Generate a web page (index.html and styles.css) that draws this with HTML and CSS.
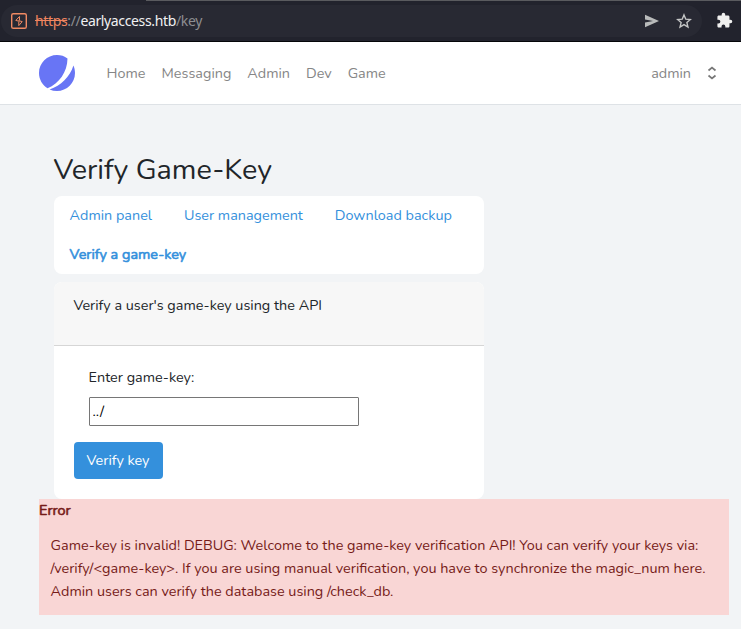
FILE: index.html
```html
<!DOCTYPE html>
<html lang="en">
<head>
<meta charset="utf-8">
<title>Verify Game-Key</title>
<link rel="stylesheet" href="styles.css">
</head>
<body>
<div class="browser-bar">
  <div class="address">
    <svg class="site-icon" width="18" height="18" viewBox="0 0 18 18"><rect x="1.700" y="1.700" width="14.600" height="14.600" rx="1.600" fill="none" stroke="#f08a63" stroke-width="1.400"/><path d="M9.500 4.500v3.700M9.500 4.500 5.800 8.400l3.700 1M8.500 8.600l3.700 1-3.400 4M8.800 10v3.600" fill="none" stroke="#f08a63" stroke-width="1"/></svg>
    <div class="url"><span class="scheme">https</span>://<span class="host">earlyaccess.htb</span>/key</div>
    <svg class="send" width="16" height="14" viewBox="0 0 16 14"><path d="M1 .7 15 7 1 13.300V8.500L9 7 1 5.500z" fill="#b9bbbb"/></svg>
    <svg class="star" width="16" height="16" viewBox="0 0 16 16"><path d="m8 1.900 1.800 4.250 4.600.4-3.500 3 1.050 4.500L8 11.650l-3.950 2.400 1.050-4.500-3.500-3 4.600-.4z" fill="none" stroke="#c5c6c6" stroke-width="1.400"/></svg>
  </div>
  <svg class="puzzle" width="17" height="17" viewBox="0 0 24 24"><path d="M20.500 11H19V7c0-1.100-.9-2-2-2h-4V3.500a2.500 2.500 0 0 0-5 0V5H4c-1.100 0-2 .9-2 2v3.800h1.500a2.700 2.700 0 0 1 0 5.400H2V20c0 1.100.9 2 2 2h3.800v-1.500a2.700 2.700 0 0 1 5.400 0V22H17c1.100 0 2-.9 2-2v-4h1.500a2.500 2.500 0 0 0 0-5z" fill="#f0f0ef"/></svg>
</div>
<header class="site-header">
  <svg class="logo" width="36" height="36" viewBox="0 0 48 48"><path d="M11.395 44.428C4.557 40.198 0 32.632 0 24 0 10.745 10.745 0 24 0a23.891 23.891 0 0 1 13.997 4.502c-.2 17.907-11.097 33.245-26.602 39.926z" fill="#6875f5"/><path d="M14.134 45.885A23.914 23.914 0 0 0 24 48c13.255 0 24-10.745 24-24 0-3.516-.756-6.856-2.115-9.866-4.659 15.143-16.608 27.092-31.750 31.751z" fill="#6875f5"/></svg>
  <nav class="main-nav">
    <a>Home</a><a>Messaging</a><a>Admin</a><a>Dev</a><a>Game</a>
  </nav>
  <div class="user"><span>admin</span>
    <svg width="16" height="16" viewBox="0 0 16 16"><path d="M4.500 5.500 8 2.500l3.500 3M4.500 10.500l3.500 3 3.500-3" fill="none" stroke="#777" stroke-width="1.700"/></svg>
  </div>
</header>
<main>
  <h1>Verify Game-Key</h1>
  <nav class="tabs"><a>Admin panel</a><a>User management</a><a>Download backup</a><a class="active">Verify a game-key</a></nav>
  <section class="card">
    <div class="card-head">Verify a user's game-key using the API</div>
    <form class="card-body">
      <label for="key">Enter game-key:</label>
      <input id="key" type="text" value="../">
      <button type="button">Verify key</button>
    </form>
  </section>
  <div class="alert">
    <strong>Error</strong>
    <p>Game-key is invalid! DEBUG: Welcome to the game-key verification API! You can verify your keys via:<br>/verify/&lt;game-key&gt;. If you are using manual verification, you have to synchronize the magic_num here.<br>Admin users can verify the database using /check_db.</p>
  </div>
</main>
</body>
</html>
```
FILE: styles.css
```css
* { box-sizing: border-box; }
body {
  margin: 0;
  height: 629px;
  overflow: hidden;
  background: #f2f4f6;
  color: #212529;
  font: 14.4px/23px Nunito, Lato, sans-serif;
}
a, h1, p, strong, button { white-space: nowrap; }
svg { display: block; flex: none; }

.browser-bar {
  display: flex;
  align-items: center;
  height: 42px;
  background: linear-gradient(90deg, #22232d 146px, #5a5b5f 146px) top / 100% 1px no-repeat #22232d;
  border-bottom: 1px solid #050609;
}
.address {
  display: flex;
  align-items: center;
  width: 701px;
  height: 32px;
  margin-left: 1px;
  padding: 0 10px 0 9px;
  border-radius: 16px;
  background: #282933;
}
.url {
  flex: 1;
  margin-left: 7px;
  color: #8d8e91;
  font: 14px/20px "Noto Sans", sans-serif;
  letter-spacing: -.36px;
}
.scheme { color: #f0855f; text-decoration: line-through; }
.host { color: #f1f1f2; }
.send { margin-right: 16px; }
.puzzle { margin-left: 14px; }

.site-header {
  display: flex;
  align-items: center;
  height: 63px;
  padding: 0 21px 0 39px;
  background: #fff;
  border-bottom: 1px solid #dee2e6;
  color: #868686;
}
.main-nav { display: flex; gap: 16px; margin-left: 31.6px; }
.user { display: flex; align-items: center; gap: 13px; margin-left: auto; }

main { padding: 47px 12px 0 39px; }
h1 {
  margin: 0 0 9px 14.6px;
  font-size: 28.8px;
  line-height: 35px;
  font-weight: 400;
}
.tabs {
  display: flex;
  flex-wrap: wrap;
  width: 430px;
  margin: 0 0 8px 15px;
  border-radius: 8px;
  background: #fff;
}
.tabs a { padding: 8px 16.300px 8px 15.600px; color: #3490dc; }
.tabs .active, .alert strong { -webkit-text-stroke: .6px currentColor; }
.card {
  width: 430px;
  height: 217px;
  margin-left: 15px;
  border-radius: 8px;
  background: #fff;
}
.card-head {
  height: 64px;
  padding: 12px 19.400px;
  border-radius: 8px 8px 0 0;
  border-bottom: 1px solid #d6d6d6;
  background: #f7f7f7;
}
.card-body { display: flex; flex-direction: column; align-items: flex-start; padding: 20px; }
label { margin-left: 14.600px; }
input {
  width: 270px;
  height: 29px;
  margin: 8px 0 16px 15px;
  padding: 1px 2px 2px 2.500px;
  border: 1px solid #767676;
  border-radius: 1px;
  background: #fff;
  color: #000;
  font: inherit;
}
button {
  width: 89px;
  height: 37px;
  padding: 0 1px 0 0;
  border: 0;
  border-radius: 4px;
  background: #3490dc;
  color: #fff;
  font: inherit;
}
.alert { height: 116px; background: #f9d6d5; color: #761b18; }
.alert strong { display: block; font-weight: 400; }
.alert p { margin: 0; padding: 12px 11.600px; }
```
